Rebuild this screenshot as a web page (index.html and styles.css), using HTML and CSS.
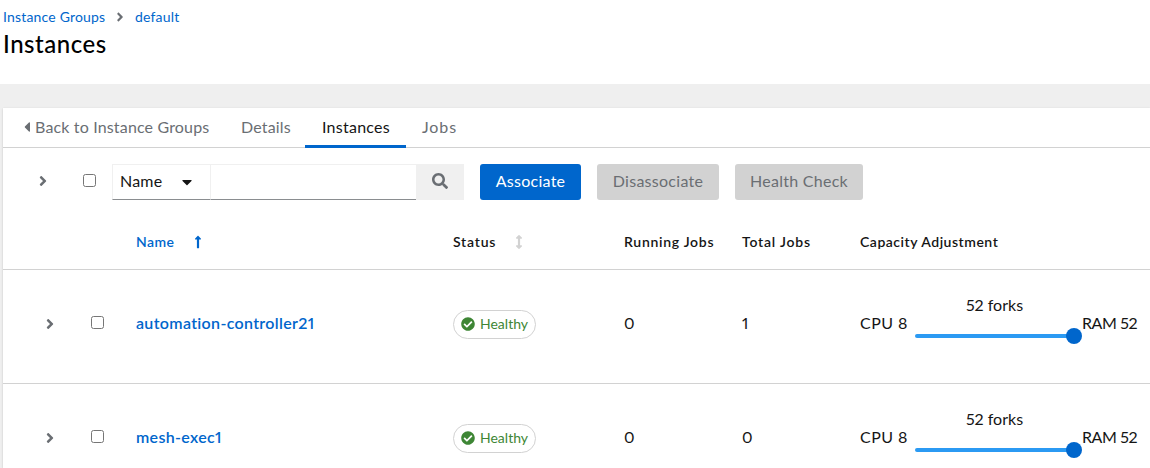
FILE: index.html
```html
<!DOCTYPE html>
<html lang="en">
<head>
<meta charset="utf-8">
<title>Instances</title>
<link rel="stylesheet" href="styles.css">
</head>
<body>
<svg class="defs" width="0" height="0">
  <symbol id="angle" viewBox="0 0 256 512"><path d="M224.3 273l-136 136c-9.4 9.4-24.6 9.4-33.9 0l-22.6-22.6c-9.4-9.4-9.4-24.6 0-33.9l96.4-96.4-96.4-96.4c-9.4-9.4-9.4-24.6 0-33.9L54.3 103c9.4-9.4 24.6-9.4 33.9 0l136 136c9.5 9.4 9.5 24.6.1 34z"/></symbol>
  <symbol id="check" viewBox="0 0 512 512"><path d="M504 256c0 136.967-111.033 248-248 248S8 392.967 8 256 119.033 8 256 8s248 111.033 248 248zM227.314 387.314l184-184c6.248-6.248 6.248-16.379 0-22.627l-22.627-22.627c-6.248-6.249-16.379-6.249-22.628 0L216 308.118l-70.059-70.059c-6.248-6.248-16.379-6.248-22.628 0l-22.627 22.627c-6.248 6.248-6.248 16.379 0 22.627l104 104c6.249 6.249 16.379 6.249 22.628.001z"/></symbol>
</svg>
<header class="page-header">
  <nav class="breadcrumb">
    <a class="crumb-groups">Instance Groups</a>
    <svg class="crumb-sep"><use href="#angle"/></svg>
    <a class="crumb-default">default</a>
  </nav>
  <h1 class="title">Instances</h1>
</header>
<main class="card">
  <nav class="tabs">
    <a class="tab tab-back"><svg class="caret-left" viewBox="0 0 192 512"><path d="M192 127.338v257.324c0 17.818-21.543 26.741-34.142 14.142L29.196 270.142c-7.81-7.81-7.81-20.474 0-28.284l128.662-128.662c12.599-12.6 34.142-3.676 34.142 14.142z"/></svg><span>Back to Instance Groups</span></a>
    <a class="tab tab-details"><span>Details</span></a>
    <a class="tab tab-current"><span>Instances</span></a>
    <a class="tab tab-jobs"><span>Jobs</span></a>
  </nav>
  <div class="toolbar">
    <svg class="angle"><use href="#angle"/></svg>
    <input class="box" type="checkbox" aria-label="Select all">
    <div class="search">
      <div class="select"><span>Name</span><svg class="caret-down" viewBox="0 0 320 512"><path d="M31.3 192h257.3c17.8 0 26.7 21.5 14.1 34.1L174.1 354.8c-7.8 7.8-20.5 7.8-28.3 0L17.2 226.1C4.6 213.5 13.5 192 31.3 192z"/></svg></div>
      <div class="field"></div>
      <div class="search-button"><svg class="magnifier" viewBox="0 0 512 512"><path d="M505 442.7L405.3 343c-4.5-4.5-10.6-7-17-7H372c27.6-35.3 44-79.7 44-128C416 93.1 322.9 0 208 0S0 93.1 0 208s93.1 208 208 208c48.3 0 92.7-16.4 128-44v16.3c0 6.4 2.5 12.5 7 17l99.7 99.7c9.4 9.4 24.6 9.4 33.9 0l28.3-28.3c9.4-9.4 9.4-24.6.1-34zM208 336c-70.7 0-128-57.2-128-128 0-70.7 57.2-128 128-128 70.7 0 128 57.2 128 128 0 70.7-57.2 128-128 128z"/></svg></div>
    </div>
    <div class="button associate">Associate</div>
    <div class="button disabled disassociate">Disassociate</div>
    <div class="button disabled health">Health Check</div>
  </div>
  <div class="row head">
    <span class="col-name sorted"><span class="th-name">Name</span><svg class="sort-up" viewBox="0 0 256 512"><path d="M88 166.059V468c0 6.627 5.373 12 12 12h56c6.627 0 12-5.373 12-12V166.059h46.059c21.382 0 32.09-25.851 16.971-40.971l-86.059-86.059c-9.373-9.373-24.569-9.373-33.941 0l-86.059 86.059c-15.119 15.119-4.411 40.971 16.971 40.971H88z"/></svg></span>
    <span class="th-cell"><span class="th-status">Status</span><svg class="sort-both" viewBox="0 0 256 512"><path d="M214.059 377.941H168V134.059h46.059c21.382 0 32.09-25.851 16.971-40.971L144.971 7.029c-9.373-9.373-24.568-9.373-33.941 0L24.971 93.088c-15.119 15.119-4.411 40.971 16.971 40.971H88v243.882H41.941c-21.382 0-32.09 25.851-16.971 40.971l86.059 86.059c9.373 9.373 24.568 9.373 33.941 0l86.059-86.059c15.12-15.119 4.412-40.971-16.97-40.971z"/></svg></span>
    <span class="th-running">Running Jobs</span>
    <span class="th-total">Total Jobs</span>
    <span class="th-capacity">Capacity Adjustment</span>
  </div>
  <div class="row">
    <svg class="angle"><use href="#angle"/></svg>
    <input class="box" type="checkbox" aria-label="Select automation-controller21">
    <a class="name name-controller">automation-controller21</a>
    <span class="status"><svg class="check"><use href="#check"/></svg><span>Healthy</span></span>
    <span class="num">0</span>
    <span class="num">1</span>
    <div class="capacity"><span class="cpu">CPU 8</span><div class="slider"><span class="forks">52 forks</span><div class="rail"><i class="thumb"></i></div></div><span class="ram">RAM 52</span></div>
  </div>
  <div class="row">
    <svg class="angle"><use href="#angle"/></svg>
    <input class="box" type="checkbox" aria-label="Select mesh-exec1">
    <a class="name name-mesh">mesh-exec1</a>
    <span class="status"><svg class="check"><use href="#check"/></svg><span>Healthy</span></span>
    <span class="num">0</span>
    <span class="num">0</span>
    <div class="capacity"><span class="cpu">CPU 8</span><div class="slider"><span class="forks">52 forks</span><div class="rail"><i class="thumb"></i></div></div><span class="ram">RAM 52</span></div>
  </div>
</main>
</body>
</html>
```
FILE: styles.css
```css
* { box-sizing: border-box; }
html, body { height: 100%; }
body {
  margin: 0;
  overflow: hidden;
  background: #efefef;
  color: #151515;
  font: 16px/24px Lato, "Open Sans", sans-serif;
  font-variant-numeric: proportional-nums;
  white-space: nowrap;
}
svg { display: block; flex: none; fill: currentColor; }
.defs { position: absolute; }

.page-header { height: 84px; padding: 6px 3px 0; background: #fff; }
.breadcrumb { display: flex; align-items: center; height: 21px; font-size: 14px; color: #06c; }
.crumb-groups { width: 102px; letter-spacing: .18px; }
.crumb-sep { width: 8px; height: 14px; margin: 0 11px; color: #6a6e73; }
.crumb-default { letter-spacing: .18px; }
.title { margin: 1px 0 0; font-size: 24px; line-height: 31px; font-weight: 500; letter-spacing: .52px; color: #000; }

.card {
  height: 360px;
  overflow: hidden;
  margin: 24px 0 0 3px;
  background: #fff;
  box-shadow: 0 1px 2px rgba(3,3,3,.12), 0 0 2px rgba(3,3,3,.06);
}
.tabs { display: flex; height: 40px; padding-left: 5px; border-bottom: 1px solid #d2d2d2; color: #6a6e73; }
.tab { display: flex; align-items: center; height: 40px; padding: 0 16px 2px; letter-spacing: .16px; }
.tab-back { width: 217px; }
.tab-details { width: 80px; }
.tab-current { width: 101px; color: #151515; border-bottom: 3px solid #06c; padding: 1px 16px 0 17px; letter-spacing: .25px; }
.tab-jobs { letter-spacing: .9px; }
.caret-left { width: 6px; height: 16px; margin-right: 5px; }

.toolbar { display: flex; align-items: center; height: 68px; padding-left: 36px; }
.angle { width: 8px; height: 16px; color: #6a6e73; }
.box { width: 13px; height: 13px; margin: 0; flex: none; }
.toolbar .angle { margin-bottom: 2px; }
.toolbar .box { margin: 0 16px 3px 36px; }
.search { display: flex; width: 352px; height: 36px; margin-right: 16px; }
.select, .field { border: 1px solid #f0f0f0; border-bottom-color: #8a8d90; }
.select { display: flex; align-items: center; width: 99px; padding-left: 7px; }
.select span { width: 42px; margin: 0 20px 2px 0; letter-spacing: .2px; }
.caret-down { width: 10px; height: 16px; }
.field { flex: 1; border-left: 0; border-right: 0; }
.search-button { display: flex; align-items: center; justify-content: center; width: 48px; background: #f0f0f0; color: #6a6e73; }
.magnifier { width: 16px; height: 16px; margin-bottom: 2px; }
.button { height: 36px; line-height: 34px; margin-right: 16px; border-radius: 3px; background: #06c; color: #fff; text-align: center; letter-spacing: .27px; }
.associate { width: 101px; }
.disabled { background: #d2d2d2; color: #6a6e73; }
.disassociate { width: 122px; }
.health { width: 128px; }

.row {
  display: grid;
  grid-template-columns: 45px 45px 317px 171px 118px 118px auto;
  align-items: center;
  height: 114px;
  padding: 0 0 6px 43px;
  border-bottom: 1px solid #d2d2d2;
}
.head { height: 54px; padding-bottom: 2px; font-size: 14px; font-weight: 600; }
.col-name { grid-column: 3; }
.sorted, .th-cell { display: flex; align-items: center; }
.sorted { color: #06c; }
.th-name { width: 58px; letter-spacing: .4px; }
.th-status { width: 62px; letter-spacing: .8px; }
.th-running { letter-spacing: .72px; }
.th-total { letter-spacing: .8px; }
.th-capacity { letter-spacing: .52px; }
.sort-up, .sort-both { width: 8px; height: 14px; }
.row .box { margin-bottom: 3px; }
.sort-both { color: #d2d2d2; }
.name { color: #06c; font-weight: 600; margin-bottom: 2px; }
.name-controller { letter-spacing: .33px; }
.name-mesh { letter-spacing: .33px; }
.num { margin-bottom: 2px; }
.status {
  display: flex;
  align-items: center;
  width: 83px;
  height: 29px;
  padding-left: 7px;
  margin-top: 1px;
  border: 1px solid #d2d2d2;
  border-radius: 15px;
  font-size: 14px;
  color: #3e8635;
}
.check { width: 14px; height: 14px; margin-right: 5px; }
.capacity { display: flex; align-items: center; }
.cpu { width: 55px; margin-bottom: 2px; letter-spacing: .45px; }
.slider { width: 159px; height: 62px; margin-right: 8px; text-align: center; }
.forks { display: block; line-height: 24px; }
.rail { display: flex; align-items: center; justify-content: flex-end; height: 4px; margin-top: 17px; border-radius: 2px; background: #2b9af3; }
.thumb { flex: none; width: 16px; height: 16px; margin-right: -8px; border-radius: 50%; background: #06c; }
.ram { margin-bottom: 2px; letter-spacing: -.4px; }
```
